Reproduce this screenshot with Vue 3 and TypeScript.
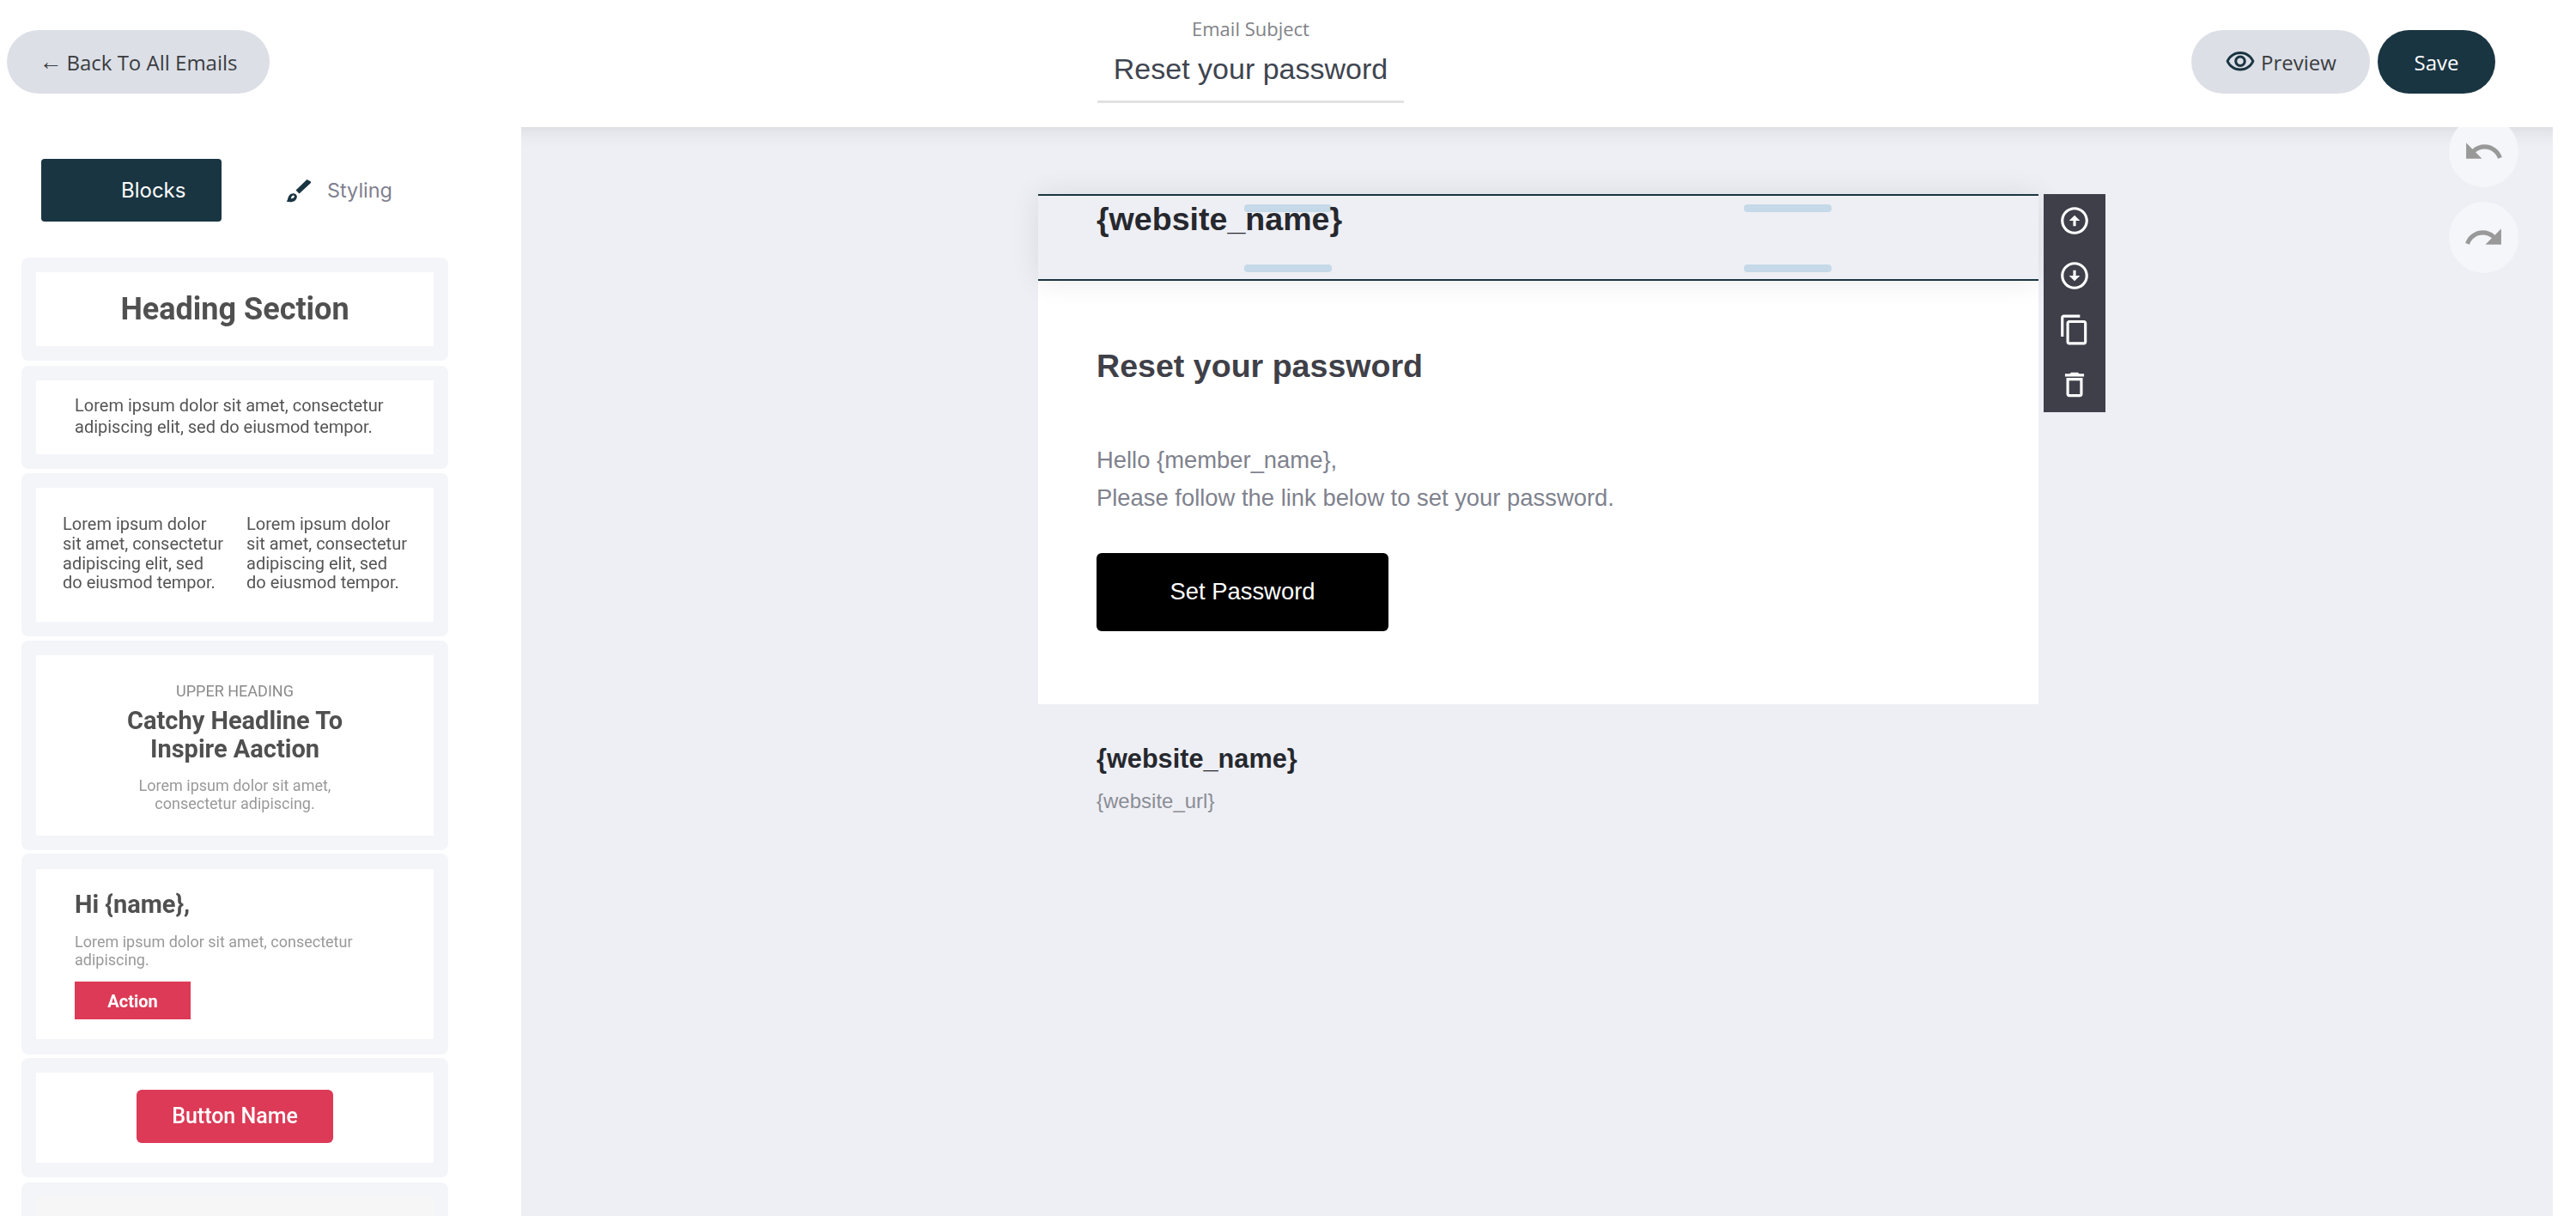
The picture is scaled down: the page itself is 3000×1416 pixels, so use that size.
<script setup lang="ts">
const toolIcons = [
  "M12 2C6.48 2 2 6.48 2 12s4.48 10 10 10 10-4.48 10-10S17.52 2 12 2zm0 18c-4.41 0-8-3.59-8-8s3.59-8 8-8 8 3.59 8 8-3.59 8-8 8zM13 12v4h-2v-4H8l4-4 4 4h-3z",
  "M12 2C6.48 2 2 6.48 2 12s4.48 10 10 10 10-4.48 10-10S17.52 2 12 2zm0 18c-4.41 0-8-3.59-8-8s3.59-8 8-8 8 3.59 8 8-3.59 8-8 8zM11 12V8h2v4h3l-4 4-4-4h3z",
  "M16 1H4c-1.1 0-2 .9-2 2v14h2V3h12V1zm3 4H8c-1.1 0-2 .9-2 2v14c0 1.1.9 2 2 2h11c1.1 0 2-.9 2-2V7c0-1.1-.9-2-2-2zm0 16H8V7h11v14z",
  "M6 19c0 1.1.9 2 2 2h8c1.1 0 2-.9 2-2V7H6v12zM8 9h8v10H8V9zm7.5-5l-1-1h-5l-1 1H5v2h14V4z",
];
</script>

<template>
  <div class="page">
    <header class="topbar">
      <button class="pill back"><span class="arrow">←</span> Back To All Emails</button>
      <div class="subject">
        <div class="subject-label">Email Subject</div>
        <div class="subject-value">Reset your password</div>
      </div>
      <div class="actions">
        <button class="pill preview">
          <svg width="36" height="36" viewBox="0 0 24 24" fill="#1a3542">
            <path d="M12 6c3.79 0 7.17 2.13 8.82 5.5C19.17 14.87 15.79 17 12 17s-7.17-2.13-8.82-5.5C4.83 8.13 8.21 6 12 6m0-2C7 4 2.73 7.11 1 11.5 2.73 15.89 7 19 12 19s9.27-3.11 11-7.5C21.27 7.11 17 4 12 4zm0 5c1.38 0 2.5 1.12 2.5 2.5S13.38 14 12 14s-2.5-1.12-2.5-2.5S10.62 9 12 9m0-2c-2.48 0-4.5 2.02-4.5 4.5S9.52 16 12 16s4.5-2.02 4.5-4.5S14.48 7 12 7z" />
          </svg>
          Preview
        </button>
        <button class="pill save">Save</button>
      </div>
    </header>

    <div class="workspace">
      <aside class="sidebar">
        <div class="tabs">
          <div class="tab active">Blocks</div>
          <div class="tab styling">
            <svg width="30" height="28" viewBox="0 0 30 28" fill="#1a3542">
              <path d="M24.5 1l4.5 2.5v1.5L15.5 17.5 11.5 13.5z" />
              <path fill-rule="evenodd" d="M0.5 26.5c2-1 1.4-4.4 3.4-7 1.9-2.4 5.8-3 7.9-.9 1.8 1.8 1.2 4.8-.8 6.6-2.8 2.5-7 2.6-10.5 1.3zM6 23.2c1.6.2 3.2-.5 3.8-1.9.4-1-.3-1.8-1.3-1.7-1.6.2-2.3 1.9-2.5 3.6z" />
            </svg>
            <span>Styling</span>
          </div>
        </div>

        <div class="blocks">
          <div class="block-card">
            <div class="mini mini-heading">Heading Section</div>
          </div>
          <div class="block-card">
            <div class="mini mini-text">
              Lorem ipsum dolor sit amet, consectetur<br />adipiscing elit, sed do eiusmod tempor.
            </div>
          </div>
          <div class="block-card">
            <div class="mini mini-cols">
              <p>Lorem ipsum dolor<br />sit amet, consectetur<br />adipiscing elit, sed<br />do eiusmod tempor.</p>
              <p>Lorem ipsum dolor<br />sit amet, consectetur<br />adipiscing elit, sed<br />do eiusmod tempor.</p>
            </div>
          </div>
          <div class="block-card">
            <div class="mini mini-hero">
              <div class="upper">UPPER HEADING</div>
              <div class="headline">Catchy Headline To<br />Inspire Aaction</div>
              <div class="hero-text">Lorem ipsum dolor sit amet,<br />consectetur adipiscing.</div>
            </div>
          </div>
          <div class="block-card card-hi">
            <div class="mini mini-hi">
              <div class="hi">Hi {name},</div>
              <div class="hi-text">Lorem ipsum dolor sit amet, consectetur<br />adipiscing.</div>
              <div class="hi-action">Action</div>
            </div>
          </div>
          <div class="block-card">
            <div class="mini mini-button">
              <div class="red-button">Button Name</div>
            </div>
          </div>
          <div class="block-card">
            <div class="mini mini-empty"></div>
          </div>
        </div>
      </aside>

      <main class="canvas">
        <div class="history undo">
          <svg width="49" height="49" viewBox="0 0 24 24" fill="#999">
            <path d="M12.5 8c-2.65 0-5.05.99-6.9 2.6L2 7v9h9l-3.62-3.62c1.39-1.16 3.16-1.88 5.12-1.88 3.54 0 6.55 2.31 7.6 5.5l2.37-.78C21.08 11.03 17.15 8 12.5 8z" />
          </svg>
        </div>
        <div class="history redo">
          <svg width="49" height="49" viewBox="0 0 24 24" fill="#999">
            <path d="M18.4 10.6C16.55 8.99 14.15 8 11.5 8c-4.65 0-8.58 3.03-9.96 7.22L3.9 16c1.05-3.19 4.05-5.5 7.6-5.5 1.95 0 3.73.72 5.12 1.88L13 16h9V7l-3.6 3.6z" />
          </svg>
        </div>

        <div class="email">
          <section class="email-head">
            <span class="handle h1"></span>
            <span class="handle h2"></span>
            <span class="handle h3"></span>
            <span class="handle h4"></span>
            <div class="site-name">{website_name}</div>
            <div class="toolbar">
              <svg v-for="d in toolIcons" :key="d" width="38" height="38" viewBox="0 0 24 24" fill="#fff">
                <path :d="d" />
              </svg>
            </div>
          </section>
          <section class="email-body">
            <h1>Reset your password</h1>
            <p>Hello {member_name},<br />Please follow the link below to set your password.</p>
            <div class="set-password">Set Password</div>
          </section>
          <footer class="email-foot">
            <div class="foot-name">{website_name}</div>
            <div class="foot-url">{website_url}</div>
          </footer>
        </div>
      </main>
      <div class="gutter"></div>
    </div>
  </div>
</template>

<style>
html,
body {
  margin: 0;
  background: #fff;
}
</style>

<style scoped>
.page {
  display: flex;
  flex-direction: column;
  width: 3000px;
  height: 1416px;
  overflow: hidden;
  background: #fff;
}

.topbar {
  display: flex;
  align-items: flex-start;
  height: 148px;
  box-sizing: border-box;
  padding: 35px 94px 0 8px;
}

.pill {
  display: flex;
  align-items: center;
  justify-content: center;
  height: 74px;
  border: 0;
  border-radius: 37px;
  font-family: "Open Sans", sans-serif;
  font-size: 24px;
  color: #3a3c40;
  background: #dcdfe6;
}

.back {
  gap: 5px;
  width: 306px;
  padding: 0;
}

.arrow {
  font-family: "Liberation Sans", Arial, sans-serif;
  font-size: 27px;
}

.subject {
  width: 357px;
  margin: -15px 0 0 964px;
  text-align: center;
}

.subject-label {
  font-family: "Open Sans", sans-serif;
  font-size: 22px;
  line-height: 26px;
  color: #808287;
}

.subject-value {
  height: 62px;
  margin-top: 9px;
  border-bottom: 3px solid #e2e2e2;
  font-family: "Liberation Sans", Arial, sans-serif;
  font-size: 34px;
  line-height: 51px;
  color: #3f4550;
}

.actions {
  display: flex;
  gap: 9px;
  margin-left: auto;
}

.preview {
  width: 208px;
  gap: 6px;
  padding: 0;
}

.save {
  width: 137px;
  padding: 0;
  color: #fff;
  background: #1a3542;
}

.workspace {
  display: flex;
  flex: 1;
  min-height: 0;
}

.sidebar {
  flex: none;
  width: 607px;
  box-sizing: border-box;
  padding: 37px 0 0 25px;
}

.tabs {
  display: flex;
  align-items: center;
  margin-left: 23px;
  height: 73px;
}

.tab {
  display: flex;
  align-items: center;
  font-family: Inter, sans-serif;
  font-size: 24px;
  color: #80808f;
}

.styling {
  gap: 18px;
  font-size: 23.4px;
}

.tab.active {
  box-sizing: border-box;
  width: 210px;
  height: 73px;
  margin-right: 75px;
  padding-left: 93px;
  border-radius: 4px;
  color: #fff;
  background: #1a3542;
}

.blocks {
  display: flex;
  flex-direction: column;
  gap: 5px;
  width: 497px;
  margin-top: 42px;
}

.block-card {
  flex: none;
  padding: 17px;
  border-radius: 8px;
  background: #f4f5f9;
}

.block-card:first-child {
  margin-bottom: 1px;
}

.block-card:nth-child(4) {
  margin-bottom: -1px;
}

.card-hi {
  padding: 18px 17px;
  margin-bottom: -1px;
}

.block-card:nth-child(6) {
  margin-bottom: 1px;
}

.mini {
  box-sizing: border-box;
  background: #fff;
  font-family: Roboto, sans-serif;
  color: #555;
  filter: blur(0.6px);
}

.mini-heading {
  height: 86px;
  font-size: 36px;
  font-weight: 700;
  line-height: 86px;
  text-align: center;
  color: #505050;
}

.mini-text {
  height: 86px;
  padding: 17px 0 0 45px;
  font-size: 20px;
  line-height: 25px;
  color: #555;
}

.mini-cols {
  display: grid;
  grid-template-columns: 214px 1fr;
  height: 156px;
  padding: 31px 0 0 31px;
  font-size: 20px;
  line-height: 22.8px;
  color: #555;
}

.mini-cols p {
  margin: 0;
}

.mini-hero {
  height: 210px;
  padding-top: 30px;
  text-align: center;
}

.upper {
  font-size: 18px;
  line-height: 24px;
  color: #8a8a8a;
}

.headline {
  margin-top: 6px;
  font-size: 29px;
  font-weight: 700;
  line-height: 32.5px;
  color: #505050;
}

.hero-text {
  margin-top: 15.5px;
  font-size: 18px;
  line-height: 21px;
  color: #999;
}

.mini-hi {
  height: 198px;
  padding: 24px 0 0 45px;
}

.hi {
  font-size: 29px;
  font-weight: 700;
  line-height: 34px;
  color: #505050;
}

.hi-text {
  margin-top: 16px;
  font-size: 18px;
  line-height: 21px;
  color: #999;
}

.hi-action {
  width: 135px;
  height: 44px;
  margin-top: 15px;
  font-size: 20px;
  font-weight: 700;
  line-height: 46px;
  text-align: center;
  color: #fff;
  background: #dc3a56;
}

.mini-button {
  display: flex;
  align-items: center;
  justify-content: center;
  height: 105px;
  padding-bottom: 3px;
}

.red-button {
  width: 229px;
  height: 62px;
  border-radius: 6px;
  font-size: 25px;
  font-weight: 500;
  line-height: 62px;
  text-align: center;
  color: #fff;
  background: #dc3a56;
}

.mini-empty {
  height: 105px;
  background: #f5f6f5;
}

.canvas {
  position: relative;
  flex: 1;
  min-width: 0;
  padding-top: 78px;
  overflow: hidden;
  background: #eeeff4;
  box-shadow: inset 0 26px 26px -26px rgba(0, 0, 0, 0.12);
}

.gutter {
  flex: none;
  width: 27px;
}

.history {
  position: absolute;
  left: 2245px;
  display: flex;
  align-items: center;
  justify-content: center;
  width: 81px;
  height: 83px;
  border-radius: 50%;
  background: #f5f6f9;
}

.undo {
  top: -13px;
}

.redo {
  top: 87px;
}

.email {
  width: 1165px;
  margin-left: 602px;
}

.email-head {
  position: relative;
  z-index: 1;
  box-sizing: border-box;
  height: 101px;
  padding: 0 68px;
  border-top: 2px solid #1a3542;
  border-bottom: 2px solid #1a3542;
  background: #eeeff4;
  box-shadow: 0 0 34px rgba(0, 0, 0, 0.09);
}

.handle {
  position: absolute;
  width: 102px;
  height: 9px;
  border-radius: 4px;
  background: #c5d9e8;
}

.h1 {
  top: 10px;
  left: 240px;
}

.h2 {
  top: 10px;
  left: 822px;
}

.h3 {
  top: 80px;
  left: 240px;
}

.h4 {
  top: 80px;
  left: 822px;
}

.site-name {
  position: relative;
  padding-top: 2px;
  font-family: "Liberation Sans", Arial, sans-serif;
  font-size: 37.6px;
  font-weight: 700;
  line-height: 50px;
  color: #26282e;
}

.toolbar {
  position: absolute;
  top: -2px;
  left: calc(100% + 6px);
  display: flex;
  flex-direction: column;
  align-items: center;
  gap: 25.5px;
  box-sizing: border-box;
  width: 72px;
  height: 254px;
  padding-top: 12px;
  background: #3f3f4a;
}

.email-body {
  box-sizing: border-box;
  height: 493px;
  padding: 77px 68px 0;
  font-family: "Liberation Sans", Arial, sans-serif;
  background: #fff;
}

.email-body h1 {
  margin: 0;
  font-size: 37.6px;
  font-weight: 700;
  line-height: 44px;
  color: #3f4048;
}

.email-body p {
  margin: 66px 0 0;
  font-size: 27.4px;
  line-height: 44px;
  color: #80828e;
}

.set-password {
  width: 340px;
  height: 91px;
  margin-top: 42px;
  border-radius: 6px;
  font-size: 27.4px;
  line-height: 90px;
  text-align: center;
  color: #fff;
  background: #000;
}

.email-foot {
  padding: 45px 68px 0;
  font-family: "Liberation Sans", Arial, sans-serif;
}

.foot-name {
  font-size: 30.7px;
  font-weight: 700;
  line-height: 38px;
  color: #26282e;
}

.foot-url {
  margin-top: 15px;
  font-size: 24px;
  line-height: 30px;
  color: #8b8d96;
}
</style>
